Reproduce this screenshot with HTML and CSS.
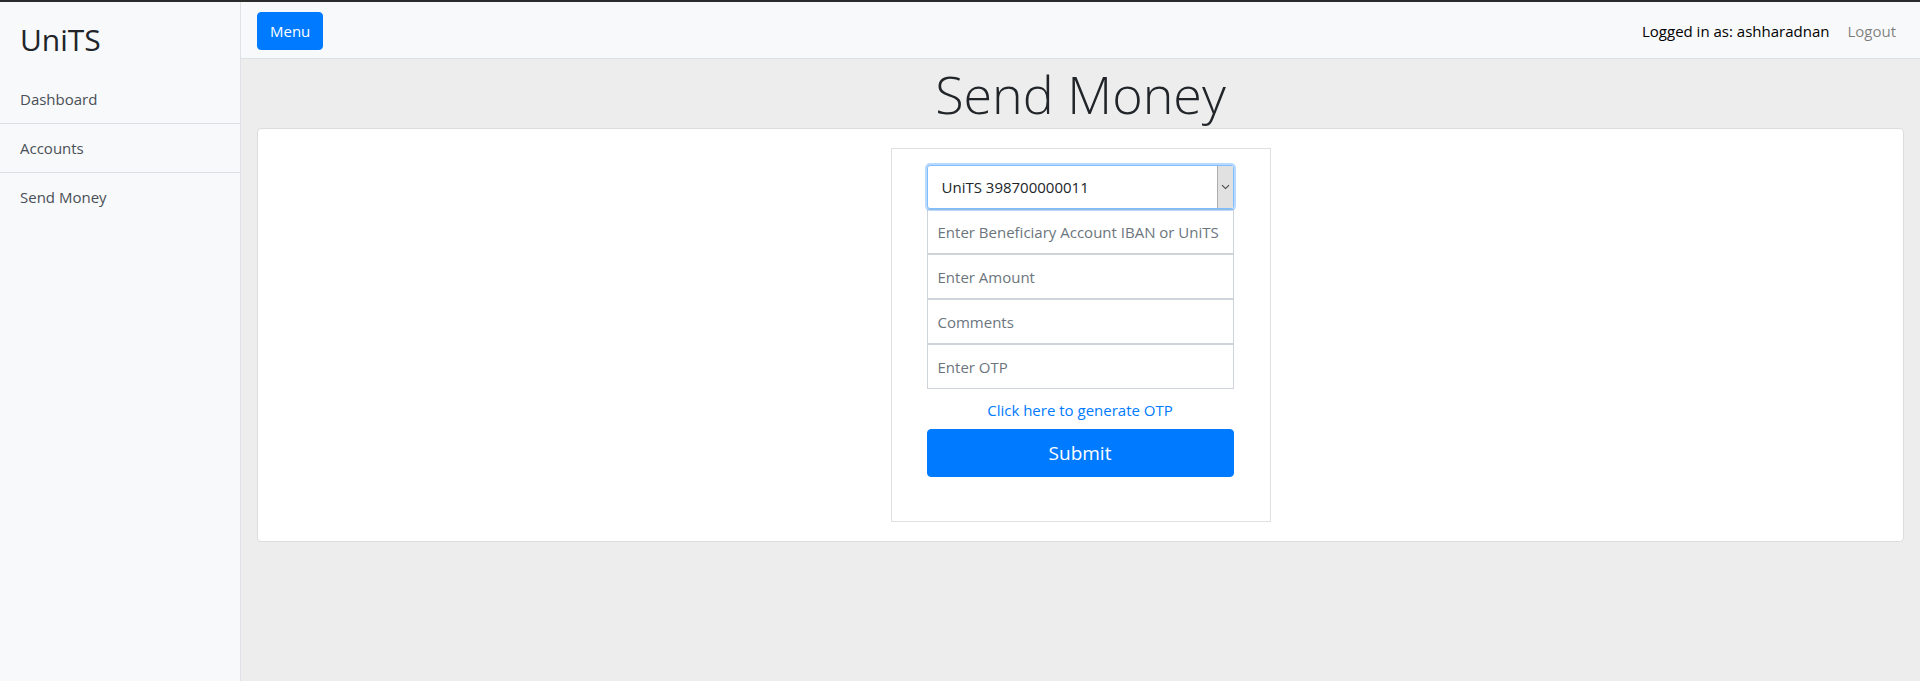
FILE: index.html
```html
<!DOCTYPE html>
<html lang="en">
<head>
<meta charset="utf-8">
<title>UniTS - Send Money</title>
<link rel="stylesheet" href="styles.css">
</head>
<body>
<div class="topbar"></div>
<div class="wrapper">
  <aside class="sidebar">
    <div class="sidebar-heading">UniTS</div>
    <nav class="list-group">
      <a class="list-item" href="#">Dashboard</a>
      <a class="list-item" href="#">Accounts</a>
      <a class="list-item" href="#">Send Money</a>
    </nav>
  </aside>
  <div class="page">
    <header class="navbar">
      <button class="btn btn-primary" type="button">Menu</button>
      <div class="nav-right">
        <span class="nav-text">Logged in as: ashharadnan</span>
        <a class="nav-link" href="#">Logout</a>
      </div>
    </header>
    <main class="main">
      <h1 class="title">Send Money</h1>
      <section class="card">
        <form class="send-form">
          <div class="select-wrap">
            <select class="form-select">
              <option>UniTS 398700000011</option>
            </select>
            <span class="select-arrow"><svg width="9" height="6" viewBox="0 0 9 6"><path d="M1 1.2 L4.5 4.6 L8 1.2" fill="none" stroke="#444" stroke-width="1.1"/></svg></span>
          </div>
          <input class="form-input" type="text" placeholder="Enter Beneficiary Account IBAN or UniTS">
          <input class="form-input" type="text" placeholder="Enter Amount">
          <input class="form-input" type="text" placeholder="Comments">
          <input class="form-input" type="text" placeholder="Enter OTP">
          <a class="otp-link" href="#">Click here to generate OTP</a>
          <button class="btn-submit" type="button">Submit</button>
        </form>
      </section>
    </main>
  </div>
</div>
</body>
</html>
```
FILE: styles.css
```css
* { box-sizing: border-box; }
html, body { margin: 0; padding: 0; height: 100%; }
body {
  font-family: "Open Sans", "Liberation Sans", sans-serif;
  font-size: 15px;
  color: #212529;
  background: #ededed;
  overflow: hidden;
}
.topbar { height: 2px; background: #2b2b2b; }
.wrapper { display: flex; height: 679px; }
.sidebar {
  width: 241px;
  flex: 0 0 241px;
  background: #f8f9fa;
  border-right: 1px solid #dee2e6;
}
.sidebar-heading {
  height: 73px;
  padding: 14px 20px 0;
  font-size: 30px;
  line-height: 48px;
  color: #212529;
}
.list-group { display: flex; flex-direction: column; }
.list-item {
  display: block;
  height: 49px;
  padding: 12px 20px;
  line-height: 24px;
  color: #495057;
  text-decoration: none;
  border-bottom: 1px solid #dcdfe3;
}
.list-item:last-child { border-bottom: none; }
.page { flex: 1; display: flex; flex-direction: column; }
.navbar {
  height: 57px;
  padding: 10px 16px 9px;
  background: #f8f9fa;
  border-bottom: 1px solid #dcdfe3;
  display: flex;
  align-items: center;
  justify-content: space-between;
}
.btn {
  font-family: inherit;
  font-size: 15px;
  line-height: 24px;
  height: 38px;
  padding: 6px 12px;
  border-radius: 4px;
  border: 1px solid transparent;
}
.btn-primary { background: #007bff; color: #fff; border-color: #007bff; width: 66px; }
.nav-right { display: flex; align-items: center; gap: 10px; }
.nav-text { color: #000; }
.nav-link { color: rgba(0,0,0,.5); text-decoration: none; padding: 8px; }
.main { padding: 0 16px; }
.title {
  margin: 0;
  text-align: center;
  font-weight: 300;
  font-size: 52px;
  line-height: 69px;
  color: #212529;
}
.card {
  background: #fff;
  border: 1px solid #dcdcdc;
  border-radius: 4px;
  padding: 19px;
  display: flex;
  justify-content: center;
}
.send-form {
  width: 380px;
  border: 1px solid #e0e0e0;
  padding: 16px 36px 44px 35px;
  display: flex;
  flex-direction: column;
}
.select-wrap { position: relative; height: 44px; }
.form-select {
  display: block;
  width: 100%;
  height: 44px;
  font-family: inherit;
  font-size: 15px;
  color: #212529;
  padding: 0 14px;
  border: 1px solid #80bdff;
  border-radius: 3px;
  background: #fff;
  appearance: none;
  -webkit-appearance: none;
  box-shadow: 0 0 0 2px rgba(0,123,255,.28);
  outline: none;
}
.select-arrow {
  position: absolute;
  top: 1px;
  right: 1px;
  width: 16px;
  height: 42px;
  background: #e1e1e1;
  border-left: 1px solid #adadad;
  display: flex;
  align-items: center;
  justify-content: center;
}
.form-input {
  display: block;
  width: 100%;
  height: 45px;
  font-family: inherit;
  font-size: 15px;
  padding: 0 10px;
  border: 1px solid #ced4da;
  background: #fff;
  color: #495057;
  outline: none;
}
.form-input::placeholder { color: #6c757d; opacity: 1; }
.otp-link {
  margin-top: 9px;
  line-height: 24px;
  text-align: center;
  color: #007bff;
  text-decoration: none;
}
.btn-submit {
  margin-top: 7px;
  height: 48px;
  width: 100%;
  font-family: inherit;
  font-size: 19px;
  color: #fff;
  background: #007bff;
  border: 1px solid #007bff;
  border-radius: 4px;
}
```
